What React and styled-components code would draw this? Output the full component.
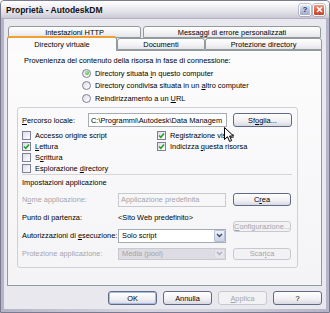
import React from "react";
import styled, { createGlobalStyle } from "styled-components";

const GlobalStyle = createGlobalStyle`
  html, body {
    margin: 0;
    padding: 0;
    background: #ffffff;
  }
  body {
    font-family: "Liberation Sans", Arial, sans-serif;
    font-size: 7.4px;
    color: #000;
  }
  * {
    box-sizing: border-box;
  }
`;

// Window chrome
const Frame = styled.div`
  position: relative;
  width: 330px;
  height: 313px;
  border: 1px solid #7a7a90;
  border-radius: 4px 4px 0 0;
  background: linear-gradient(90deg, #b4b4c6, #d4d4de 40%, #d4d4de 60%, #b4b4c6);
  display: flex;
  flex-direction: column;
  overflow: hidden;
`;
const TitleBar = styled.div`
  height: 18px;
  flex: 0 0 18px;
  display: flex;
  align-items: center;
  padding: 0 4px 0 5px;
  background: linear-gradient(#ffffff 0%, #f0f0f4 35%, #dedee6 70%, #c9c9d5 100%);
  border-bottom: 1px solid #b0b0c0;
`;
const Title = styled.span`
  flex: 1;
  font-size: 8.5px;
  font-weight: bold;
  color: #111;
  white-space: nowrap;
`;
const CaptionButton = styled.span`
  width: 12px;
  height: 12px;
  margin-left: 2px;
  border-radius: 2px;
  border: 1px solid #fff;
  box-shadow: 0 0 0 0.5px #8a8aa0;
  display: flex;
  align-items: center;
  justify-content: center;
  font-size: 8px;
  font-weight: bold;
  color: ${(p) => (p.$close ? "#fff" : "#2b3a6a")};
  background: ${(p) =>
    p.$close
      ? "linear-gradient(#ee9a84, #d9583c 60%, #c8442c)"
      : "linear-gradient(#e4e8f4, #b6c0da 60%, #a0acca)"};
`;

const Client = styled.div`
  flex: 1;
  margin: 0 3px 3px 3px;
  padding: 8px 4px 0 3px;
  background: #e8e8ee;
  display: flex;
  flex-direction: column;
`;

// Tabs
const TabStrip = styled.div`
  display: flex;
  flex-direction: column;
`;
const TabRow = styled.div`
  display: flex;
  height: ${(p) => p.$h}px;
  gap: ${(p) => p.$gap || 0}px;
  padding-left: ${(p) => p.$indent || 0}px;
  align-items: flex-end;
  position: relative;
  z-index: ${(p) => p.$z || 0};
`;
const Tab = styled.div`
  width: ${(p) => p.$w}px;
  height: ${(p) => (p.$active ? 15 : 12)}px;
  margin-bottom: ${(p) => (p.$active ? -1 : 0)}px;
  border: 1px solid #919b9c;
  border-bottom: ${(p) => (p.$active ? "none" : "1px solid #919b9c")};
  border-top: ${(p) => (p.$active ? "2px solid #f0a030" : "1px solid #919b9c")};
  border-radius: 3px 3px 0 0;
  background: ${(p) =>
    p.$active ? "#fbfbfc" : "linear-gradient(#ffffff, #f2f2f4 60%, #e4e4ea)"};
  display: flex;
  align-items: center;
  justify-content: center;
  white-space: nowrap;
  position: relative;
  z-index: ${(p) => (p.$active ? 2 : 0)};
`;

const Panel = styled.div`
  flex: 0 0 236px;
  border: 1px solid #919b9c;
  background: linear-gradient(#fcfcfd, #f4f4f6);
  padding-top: 4px;
  display: flex;
  flex-direction: column;
  position: relative;
  z-index: 1;
`;
const Heading = styled.div`
  height: 11px;
  line-height: 11px;
  margin-left: 16px;
  white-space: nowrap;
`;
const RadioList = styled.div`
  margin: 1px 0 0 74px;
  display: flex;
  flex-direction: column;
`;
const Option = styled.div`
  height: ${(p) => p.$h || 12.5}px;
  display: flex;
  align-items: center;
  gap: 4px;
  white-space: nowrap;
  color: ${(p) => (p.$disabled ? "#a4a4ac" : "#000")};
`;
const RadioCircle = styled.span`
  width: 9px;
  height: 9px;
  flex: 0 0 9px;
  border-radius: 50%;
  border: 1px solid #7d8098;
  background: linear-gradient(135deg, #dcdce6, #ffffff);
  display: flex;
  align-items: center;
  justify-content: center;
  &::after {
    content: "";
    width: 4px;
    height: 4px;
    border-radius: 50%;
    background: ${(p) =>
      p.$checked ? "radial-gradient(circle at 35% 35%, #a8f098, #2aa82a)" : "transparent"};
  }
`;
const CheckBox = styled.span`
  width: 9px;
  height: 9px;
  flex: 0 0 9px;
  border: 1px solid #7d8098;
  background: linear-gradient(135deg, #dcdce6, #ffffff);
  display: flex;
  align-items: center;
  justify-content: center;
`;

const GroupBox = styled.div`
  margin: 2.5px 0 0 9px;
  width: 281px;
  height: 161px;
  border: 1px solid #d0d0d6;
  border-radius: 3px;
  padding: 5px 5px 3px 4px;
  display: flex;
  flex-direction: column;
`;
const PathRow = styled.div`
  display: flex;
  align-items: center;
  height: 14px;
`;
const Label = styled.span`
  width: ${(p) => p.$w || "auto"};
  white-space: nowrap;
  color: ${(p) => (p.$disabled ? "#a4a4ac" : "#000")};
`;
const TextField = styled.div`
  width: ${(p) => p.$w}px;
  height: 14px;
  border: 1px solid ${(p) => (p.$disabled ? "#c8c8d0" : "#a5acb2")};
  background: ${(p) => (p.$disabled ? "transparent" : "#fff")};
  color: ${(p) => (p.$disabled ? "#a4a4ac" : "#000")};
  padding-left: 2px;
  display: flex;
  align-items: center;
  overflow: hidden;
  white-space: nowrap;
`;
const Select = styled.div`
  width: 108px;
  height: ${(p) => (p.$disabled ? 12 : 14)}px;
  border: 1px solid ${(p) => (p.$disabled ? "#c8c8d0" : "#a5acb2")};
  background: ${(p) => (p.$disabled ? "#dcdce2" : "#fff")};
  color: ${(p) => (p.$disabled ? "#a4a4ac" : "#000")};
  display: flex;
  align-items: center;
  padding-left: 3px;
  white-space: nowrap;
`;
const SelectValue = styled.span`
  flex: 1;
`;
const DropButton = styled.span`
  width: 11px;
  height: 100%;
  margin-right: 0;
  border: 1px solid ${(p) => (p.$disabled ? "#d8d8de" : "#b8c0d8")};
  border-radius: 1px;
  background: ${(p) =>
    p.$disabled ? "#e4e4ea" : "linear-gradient(#f0f2f8, #c8d0e4)"};
  display: flex;
  align-items: center;
  justify-content: center;
`;
const Button = styled.div`
  width: ${(p) => p.$w || 59}px;
  height: 14px;
  margin-left: ${(p) => p.$ml || 0}px;
  border: 1px solid ${(p) => (p.$disabled ? "#c8c8d0" : "#5f6b86")};
  border-radius: 3px;
  background: ${(p) =>
    p.$disabled ? "#f2f2f4" : "linear-gradient(#ffffff, #f0f0f4 60%, #d8d8e2)"};
  box-shadow: ${(p) => (p.$default ? "inset 0 0 0 1px #a8bce4" : "none")};
  color: ${(p) => (p.$disabled ? "#a4a4ac" : "#000")};
  display: flex;
  align-items: center;
  justify-content: center;
  white-space: nowrap;
`;
const CheckGrid = styled.div`
  margin-top: 2.5px;
  display: grid;
  grid-template-columns: 135px 1fr;
  grid-auto-rows: 11px;
  grid-auto-flow: column;
  grid-template-rows: repeat(4, 11px);
`;
const Separator = styled.div`
  height: 1px;
  background: #d4d4da;
  margin-left: 0;
`;
const SubHeading = styled.div`
  margin-top: 2px;
  height: 11px;
  line-height: 11px;
`;
const AppGrid = styled.div`
  margin-top: 3px;
  display: grid;
  grid-template-columns: 96px 115px 58px;
  grid-template-rows: repeat(4, 18px);
  align-items: center;
`;
const GridButton = styled(Button)`
  grid-column: 3;
  grid-row: ${(p) => p.$row};
  width: 58px;
  height: ${(p) => p.$h || 13}px;
`;
const ButtonRow = styled.div`
  margin-top: 5px;
  display: flex;
  justify-content: flex-end;
  gap: 6px;
`;
const Pointer = styled.svg`
  position: absolute;
  left: 223px;
  top: 126px;
  z-index: 5;
`;

const Check = () => (
  <svg width="7" height="7" viewBox="0 0 7 7">
    <path d="M1 3.5 L2.8 5.3 L6 1.5" fill="none" stroke="#21a121" strokeWidth="1.5" />
  </svg>
);

const Chevron = ({ color }) => (
  <svg width="7" height="5" viewBox="0 0 7 5">
    <path d="M1 1 L3.5 3.5 L6 1" fill="none" stroke={color} strokeWidth="1.4" />
  </svg>
);

const CheckItem = ({ checked, children }) => (
  <Option $h={11}>
    <CheckBox>{checked && <Check />}</CheckBox>
    <span>{children}</span>
  </Option>
);

const RadioItem = ({ checked, children }) => (
  <Option>
    <RadioCircle $checked={checked} />
    <span>{children}</span>
  </Option>
);

export default function App() {
  return (
    <>
      <GlobalStyle />
      <Frame>
        <TitleBar>
          <Title>Proprietà - AutodeskDM</Title>
          <CaptionButton>?</CaptionButton>
          <CaptionButton $close>
            <svg width="7" height="7" viewBox="0 0 7 7">
              <path d="M1 1 L6 6 M6 1 L1 6" stroke="#fff" strokeWidth="1.5" />
            </svg>
          </CaptionButton>
        </TitleBar>
        <Client>
          <TabStrip>
            <TabRow $h={11} $gap={2} $indent={1}>
              <Tab $w={133}>Intestazioni HTTP</Tab>
              <Tab $w={178}>Messaggi di errore personalizzati</Tab>
            </TabRow>
            <TabRow $h={12} $z={2}>
              <Tab $w={110} $active>
                Directory virtuale
              </Tab>
              <Tab $w={88}>Documenti</Tab>
              <Tab $w={117}>Protezione directory</Tab>
            </TabRow>
          </TabStrip>
          <Panel>
            <Heading>Provenienza del contenuto della risorsa in fase di connessione:</Heading>
            <RadioList>
              <RadioItem checked>
                Directory situata <u>i</u>n questo computer
              </RadioItem>
              <RadioItem>
                Directory condivisa situata in un <u>a</u>ltro computer
              </RadioItem>
              <RadioItem>
                Reindirizzamento a un <u>U</u>RL
              </RadioItem>
            </RadioList>
            <GroupBox>
              <PathRow>
                <Label $w="66px">
                  <u>P</u>ercorso locale:
                </Label>
                <TextField $w={139}>C:\Programmi\Autodesk\Data Managem</TextField>
                <Button $ml={6}>
                  Sf<u>o</u>glia...
                </Button>
              </PathRow>
              <CheckGrid>
                <CheckItem>Accesso origine script</CheckItem>
                <CheckItem checked>
                  <u>L</u>ettura
                </CheckItem>
                <CheckItem>
                  S<u>c</u>rittura
                </CheckItem>
                <CheckItem>
                  Esplorazione <u>d</u>irectory
                </CheckItem>
                <CheckItem checked>Registrazione visite</CheckItem>
                <CheckItem checked>
                  Indicizza <u>q</u>uesta risorsa
                </CheckItem>
              </CheckGrid>
              <Separator />
              <SubHeading>Impostazioni applicazione</SubHeading>
              <AppGrid>
                <Label $disabled>
                  N<u>o</u>me applicazione:
                </Label>
                <TextField $w={108} $disabled>
                  Applicazione predefinita
                </TextField>
                <GridButton $row="1">
                  C<u>r</u>ea
                </GridButton>
                <Label>Punto di partenza:</Label>
                <span>&lt;Sito Web predefinito&gt;</span>
                <GridButton $row="2 / span 2" $disabled $h={11}>
                  <u>C</u>onfigurazione...
                </GridButton>
                <Label>
                  Autorizzazioni di <u>e</u>secuzione:
                </Label>
                <Select>
                  <SelectValue>Solo script</SelectValue>
                  <DropButton>
                    <Chevron color="#3a4a70" />
                  </DropButton>
                </Select>
                <Label $disabled>Protezione applicazione:</Label>
                <Select $disabled>
                  <SelectValue>Media (pool)</SelectValue>
                  <DropButton $disabled>
                    <Chevron color="#b0b0b8" />
                  </DropButton>
                </Select>
                <GridButton $row="4" $disabled $h={12}>
                  Scar<u>i</u>ca
                </GridButton>
              </AppGrid>
            </GroupBox>
          </Panel>
          <ButtonRow>
            <Button $w={49} $default>
              OK
            </Button>
            <Button $w={49}>Annulla</Button>
            <Button $w={49} $disabled>
              <u>A</u>pplica
            </Button>
            <Button $w={49}>?</Button>
          </ButtonRow>
        </Client>
        <Pointer width="11" height="16" viewBox="0 0 11 16">
          <path
            d="M0.5 0.5 L0.5 12.5 L3.5 9.7 L5.6 14.5 L7.6 13.6 L5.6 9 L9.5 9 Z"
            fill="#fff"
            stroke="#000"
            strokeWidth="1"
          />
        </Pointer>
      </Frame>
    </>
  );
}
